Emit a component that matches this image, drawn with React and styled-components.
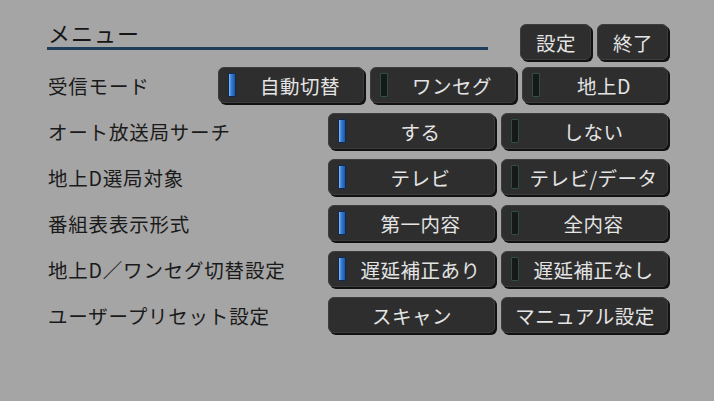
import styled, { createGlobalStyle } from "styled-components";

const GlobalStyle = createGlobalStyle`
  html, body {
    margin: 0;
    padding: 0;
    background: #a5a5a5;
  }
  body {
    font-family: "Noto Sans CJK JP", "Noto Sans", sans-serif;
  }
`;

const Page = styled.div`
  width: 714px;
  height: 401px;
  box-sizing: border-box;
  padding: 20px 46px 0 47px;
  background-color: #a5a5a5;
  display: flex;
  flex-direction: column;
`;

const Header = styled.div`
  display: flex;
  align-items: flex-start;
`;

const Title = styled.div`
  width: 440px;
  height: 27px;
  border-bottom: 3px solid #1e3f5c;
  padding-left: 1px;
  font-size: 22px;
  line-height: 25px;
  letter-spacing: 1px;
  color: #161616;
`;

const TopButtons = styled.div`
  margin-left: auto;
  margin-top: 4px;
  display: flex;
  gap: 6px;
`;

const Rows = styled.div`
  margin-top: 7px;
  display: flex;
  flex-direction: column;
  gap: 10px;
`;

const Row = styled.div`
  display: flex;
  align-items: center;
  height: 36px;
`;

const Label = styled.div`
  flex: 1;
  padding-left: 1px;
  font-size: 19.5px;
  letter-spacing: 0.8px;
  color: #1a1a1a;
  white-space: nowrap;
`;

const Group = styled.div`
  display: flex;
  gap: 6px;
`;

const Button = styled.div`
  width: ${(p) => p.$w}px;
  height: 36px;
  box-sizing: border-box;
  display: flex;
  align-items: center;
  padding-left: ${(p) => (p.$mark ? 9 : 0)}px;
  border: 1px solid #3d3d3d;
  border-radius: 6px;
  background-color: #2e2e2e;
  box-shadow: 2px 2px 0 #121212;
`;

const Indicator = styled.span`
  flex: none;
  width: 8px;
  height: 24px;
  box-sizing: border-box;
  border-radius: 1px;
  border: 1px solid ${(p) => (p.$on ? "#0d2a55" : "#2e4d44")};
  background: ${(p) =>
    p.$on
      ? "linear-gradient(to right, #8dbbef 0%, #3a80d6 35%, #1d56a6 100%)"
      : "#161a17"};
`;

const ButtonText = styled.span`
  flex: 1;
  text-align: center;
  font-size: 19.5px;
  letter-spacing: 0.5px;
  padding-left: 1px;
  color: #e4e4e4;
  white-space: nowrap;
`;

const rows = [
  { label: "受信モード", w: 146, items: ["自動切替", "ワンセグ", "地上D"], on: 0 },
  { label: "オート放送局サーチ", w: 167, items: ["する", "しない"], on: 0 },
  { label: "地上D選局対象", w: 167, items: ["テレビ", "テレビ/データ"], on: 0 },
  { label: "番組表表示形式", w: 167, items: ["第一内容", "全内容"], on: 0 },
  { label: "地上D／ワンセグ切替設定", w: 167, items: ["遅延補正あり", "遅延補正なし"], on: 0 },
  { label: "ユーザープリセット設定", w: 167, items: ["スキャン", "マニュアル設定"], on: -1 },
];

const App = () => {
  return (
    <>
      <GlobalStyle />
      <Page>
        <Header>
          <Title>メニュー</Title>
          <TopButtons>
            <Button $w={71}>
              <ButtonText>設定</ButtonText>
            </Button>
            <Button $w={71}>
              <ButtonText>終了</ButtonText>
            </Button>
          </TopButtons>
        </Header>
        <Rows>
          {rows.map((row) => (
            <Row key={row.label}>
              <Label>{row.label}</Label>
              <Group>
                {row.items.map((item, i) => (
                  <Button key={item} $w={row.w} $mark={row.on >= 0}>
                    {row.on >= 0 && <Indicator $on={row.on === i} />}
                    <ButtonText>{item}</ButtonText>
                  </Button>
                ))}
              </Group>
            </Row>
          ))}
        </Rows>
      </Page>
    </>
  );
};

export default App;
